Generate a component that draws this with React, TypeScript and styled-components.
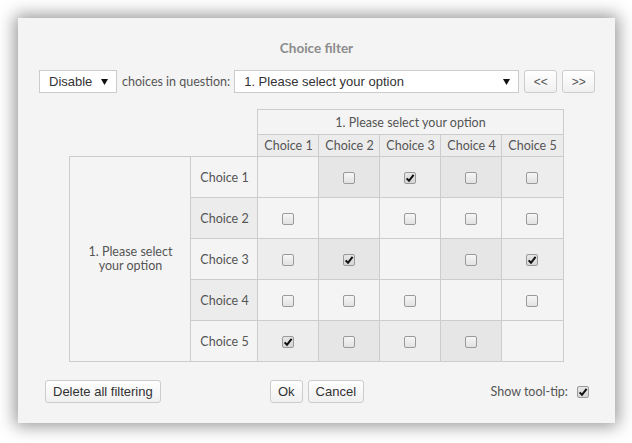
import styled, { createGlobalStyle } from 'styled-components';

const GlobalStyle = createGlobalStyle`
  html, body {
    margin: 0;
    padding: 0;
    background: #ffffff;
  }
  body {
    width: 632px;
    height: 443px;
    overflow: hidden;
    font-family: "Liberation Sans", Arial, sans-serif;
  }
`;

const Page = styled.div`
  width: 632px;
  height: 443px;
  box-sizing: border-box;
  padding: 18px 17px 20px 18px;
  background: #ffffff;
`;

const Dialog = styled.div`
  width: 597px;
  height: 405px;
  box-sizing: border-box;
  padding: 22px 21px 0 21px;
  background: #f4f4f4;
  box-shadow: 0 0 16px 3px rgba(0, 0, 0, 0.42);
  display: flex;
  flex-direction: column;
`;

const Title = styled.div`
  text-align: center;
  font-family: Lato, "Open Sans", sans-serif;
  font-weight: bold;
  font-size: 13.5px;
  line-height: 16px;
  color: #8c8c8c;
`;

const Toolbar = styled.div`
  display: flex;
  align-items: center;
  margin-top: 14px;
  height: 23px;
`;

const SelectBox = styled.div<{ $width: number }>`
  flex: 0 0 ${(p) => p.$width}px;
  height: 23px;
  box-sizing: border-box;
  display: flex;
  align-items: center;
  justify-content: space-between;
  padding: 0 8px 0 9px;
  background: #ffffff;
  border: 1px solid #cccccc;
  font-size: 13px;
  color: #333333;
  white-space: nowrap;
`;

const Label = styled.span`
  flex: 0 0 auto;
  white-space: nowrap;
  font-family: Lato, "Open Sans", sans-serif;
  font-size: 12.5px;
  color: #555555;
  margin: 0 4px 0 5px;
`;

const NavButton = styled.button`
  flex: 0 0 33px;
  height: 23px;
  margin-left: 5px;
  padding: 0;
  box-sizing: border-box;
  border: 1px solid #cccccc;
  border-radius: 3px;
  background: linear-gradient(#ffffff, #f0f0f0);
  font-family: "Liberation Sans", Arial, sans-serif;
  font-size: 12px;
  color: #555555;
`;

const Arrow = () => (
  <svg width="7" height="7" viewBox="0 0 7 7">
    <path d="M0 1 L7 1 L3.5 7 Z" fill="#111" />
  </svg>
);

const TableWrap = styled.div`
  display: flex;
  justify-content: center;
  margin-top: 16px;
`;

const Grid = styled.table`
  border-collapse: collapse;
  table-layout: fixed;
  width: 494px;
  font-family: Lato, "Open Sans", sans-serif;
  font-size: 12.5px;
  color: #555555;
`;

const Corner = styled.td`
  border: none;
  padding: 0;
`;

const Head = styled.th<{ $bg: string; $h: number }>`
  border: 1px solid #cccccc;
  background: ${(p) => p.$bg};
  height: ${(p) => p.$h}px;
  padding: 0;
  font-weight: normal;
  text-align: center;
  vertical-align: middle;
`;

const Cell = styled.td<{ $bg: string }>`
  border: 1px solid #cccccc;
  background: ${(p) => p.$bg};
  height: 40px;
  padding: 0;
  text-align: center;
  vertical-align: middle;
`;

const QuestionCell = styled.td`
  border: 1px solid #cccccc;
  background: #f4f4f4;
  padding: 0 12px;
  text-align: center;
  vertical-align: middle;
  line-height: 14px;
`;

const Box = styled.span<{ $checked: boolean }>`
  display: inline-flex;
  align-items: center;
  justify-content: center;
  width: 12px;
  height: 12px;
  box-sizing: border-box;
  border: 1px solid #9a9a9a;
  border-radius: 2px;
  background: ${(p) =>
    p.$checked ? 'linear-gradient(#e6e6e6, #d6d6d6)' : 'linear-gradient(#f6f6f6, #e2e2e2)'};
  vertical-align: middle;
`;

const Check = ({ checked }: { checked: boolean }) => (
  <Box $checked={checked}>
    {checked && (
      <svg width="10" height="10" viewBox="0 0 10 10">
        <path d="M1.6 5.4 L4 7.8 L8.6 1.8" fill="none" stroke="#111" strokeWidth="2" />
      </svg>
    )}
  </Box>
);

const Footer = styled.div`
  display: flex;
  align-items: center;
  justify-content: space-between;
  margin-top: 18px;
  padding: 0 5px 0 6px;
  height: 23px;
`;

const Side = styled.div<{ $align: string }>`
  flex: 1;
  display: flex;
  align-items: center;
  justify-content: ${(p) => p.$align};
`;

const Button = styled.button`
  height: 23px;
  box-sizing: border-box;
  padding: 0 7px;
  border: 1px solid #cccccc;
  border-radius: 3px;
  background: linear-gradient(#ffffff, #f0f0f0);
  font-family: "Liberation Sans", Arial, sans-serif;
  font-size: 13px;
  color: #333333;
  & + & {
    margin-left: 5px;
  }
`;

const TipLabel = styled.span`
  font-family: Lato, "Open Sans", sans-serif;
  font-size: 12.5px;
  color: #555555;
  margin-right: 9px;
`;

const choices = ['Choice 1', 'Choice 2', 'Choice 3', 'Choice 4', 'Choice 5'];
const checkedCells = ['0-2', '2-1', '2-4', '4-0'];

const cellBg = (row: number, col: number) => {
  if (row === col || row % 2 === 1) return '#f4f4f4';
  return col % 2 === 1 ? '#e6e6e6' : '#ededed';
};

const App = () => {
  return (
    <Page>
      <GlobalStyle />
      <Dialog>
        <Title>Choice filter</Title>
        <Toolbar>
          <SelectBox $width={78}>
            <span>Disable</span>
            <Arrow />
          </SelectBox>
          <Label>choices in question:</Label>
          <SelectBox $width={285}>
            <span>1. Please select your option</span>
            <Arrow />
          </SelectBox>
          <NavButton>&lt;&lt;</NavButton>
          <NavButton>&gt;&gt;</NavButton>
        </Toolbar>
        <TableWrap>
          <Grid>
            <colgroup>
              <col style={{ width: 121 }} />
              <col style={{ width: 67 }} />
              {choices.map((c) => (
                <col key={c} style={{ width: 61 }} />
              ))}
            </colgroup>
            <thead>
              <tr>
                <Corner rowSpan={2} colSpan={2} />
                <Head colSpan={5} $bg="#f4f4f4" $h={24}>
                  1. Please select your option
                </Head>
              </tr>
              <tr>
                {choices.map((c) => (
                  <Head key={c} $bg="#ececec" $h={21}>
                    {c}
                  </Head>
                ))}
              </tr>
            </thead>
            <tbody>
              {choices.map((rowLabel, r) => (
                <tr key={rowLabel}>
                  {r === 0 && (
                    <QuestionCell rowSpan={5}>
                      1. Please select
                      <br />
                      your option
                    </QuestionCell>
                  )}
                  <Cell $bg={r % 2 === 1 ? '#ececec' : '#f4f4f4'}>{rowLabel}</Cell>
                  {choices.map((c, col) => (
                    <Cell key={c} $bg={cellBg(r, col)}>
                      {r !== col && <Check checked={checkedCells.includes(`${r}-${col}`)} />}
                    </Cell>
                  ))}
                </tr>
              ))}
            </tbody>
          </Grid>
        </TableWrap>
        <Footer>
          <Side $align="flex-start">
            <Button>Delete all filtering</Button>
          </Side>
          <Side $align="center">
            <Button>Ok</Button>
            <Button>Cancel</Button>
          </Side>
          <Side $align="flex-end">
            <TipLabel>Show tool-tip:</TipLabel>
            <Check checked />
          </Side>
        </Footer>
      </Dialog>
    </Page>
  );
};

export default App;
